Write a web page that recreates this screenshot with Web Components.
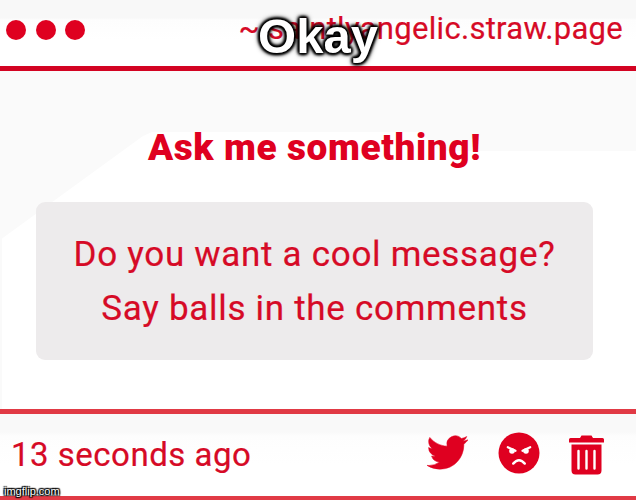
<!DOCTYPE html>
<html lang="en">
<head>
<meta charset="UTF-8">
<title>Ask me something!</title>
<style>
    body {
        margin: 0;
        overflow: hidden;
        font-family: Roboto, "Liberation Sans", sans-serif;
        color: #d60a26;
    }
</style>
</head>
<body>
<ask-window>
    <window-bar slot="header">~ saintlyangelic.straw.page</window-bar>
    <ask-card heading="Ask me something!">
        <div>Do you want a cool message?</div>
        <div>Say balls in the comments</div>
    </ask-card>
    <window-footer slot="footer">13 seconds ago</window-footer>
    <meme-caption slot="overlay">Okay</meme-caption>
    <site-mark slot="overlay">imgflip.com</site-mark>
</ask-window>

<script>
class AskWindow extends HTMLElement {
    connectedCallback() {
        this.attachShadow({ mode: 'open' });
        this.shadowRoot.innerHTML = `
            <style>
                :host {
                    position: relative;
                    display: grid;
                    grid-template-rows: 66px 343px 91px;
                    width: 636px;
                    height: 500px;
                    background: #fff;
                    overflow: hidden;
                }
            </style>
            <slot name="header"></slot>
            <slot></slot>
            <slot name="footer"></slot>
            <slot name="overlay"></slot>
        `;
    }
}

class WindowBar extends HTMLElement {
    connectedCallback() {
        this.attachShadow({ mode: 'open' });
        this.shadowRoot.innerHTML = `
            <style>
                :host {
                    display: flex;
                    justify-content: space-between;
                    align-items: flex-start;
                    box-sizing: border-box;
                    padding: 0 13px 0 6px;
                    background: linear-gradient(#f8f8f8 18px, #fdfdfd 20px, #fff 40px);
                }
                .dots {
                    display: flex;
                    gap: 9.7px;
                    padding-top: 19.7px;
                }
                .dots i {
                    width: 20px;
                    height: 20px;
                    border-radius: 50%;
                    background: #df0020;
                }
                .address {
                    padding-top: 11px;
                    font-size: 31px;
                    line-height: 36px;
                    letter-spacing: 0.3px;
                    -webkit-text-stroke: 0.2px;
                    white-space: nowrap;
                }
            </style>
            <div class="dots"><i></i><i></i><i></i></div>
            <div class="address"><slot></slot></div>
        `;
    }
}

class AskCard extends HTMLElement {
    connectedCallback() {
        this.attachShadow({ mode: 'open' });
        this.shadowRoot.innerHTML = `
            <style>
                :host {
                    position: relative;
                    z-index: 0;
                    display: flex;
                    flex-direction: column;
                    box-sizing: border-box;
                    border-top: 5px solid #d30322;
                    padding: 0 43px 0 36px;
                    background: linear-gradient(#fafafa, #fafafa) 0 0 / 2px 100% no-repeat, #fff;
                }
                /* light sheet behind the heading, cut off along a diagonal */
                .sheet {
                    position: absolute;
                    z-index: -1;
                    inset: 0;
                    background: #fafafa;
                    clip-path: polygon(0 0, 100% 0, 100% 80px, 440px 80px, 420px 61px, 152px 61px, 143px 65px, 0 169px);
                }
                h1 {
                    margin: 0;
                    padding-top: 55px;
                    height: 76px;
                    line-height: 44px;
                    font-size: 37px;
                    font-weight: 900;
                    letter-spacing: 0.6px;
                    text-align: center;
                    color: #df0020;
                    white-space: nowrap;
                }
                .question {
                    height: 158px;
                    box-sizing: border-box;
                    padding-top: 26px;
                    border-radius: 9px;
                    background: #edebec;
                    font-size: 35px;
                    line-height: 54px;
                    letter-spacing: 0.7px;
                    -webkit-text-stroke: 0.2px;
                    text-align: center;
                    white-space: nowrap;
                }
            </style>
            <div class="sheet"></div>
            <h1>${this.getAttribute('heading')}</h1>
            <div class="question"><slot></slot></div>
        `;
    }
}

class WindowFooter extends HTMLElement {
    connectedCallback() {
        this.attachShadow({ mode: 'open' });
        this.shadowRoot.innerHTML = `
            <style>
                :host {
                    display: flex;
                    justify-content: space-between;
                    box-sizing: border-box;
                    padding: 0 32px 0 11px;
                    border-top: 5px solid #e13a45;
                    border-bottom: 4px solid #e13a45;
                    background: linear-gradient(#f9f9f9 18px, #fdfdfd 22px, #fff 50px);
                }
                .time {
                    padding-top: 21px;
                    font-size: 33px;
                    line-height: 40px;
                    letter-spacing: 0.5px;
                    -webkit-text-stroke: 0.2px;
                    white-space: nowrap;
                }
                .actions {
                    display: flex;
                    align-items: flex-start;
                    color: #df0020;
                }
                svg {
                    display: block;
                    fill: currentColor;
                }
                .bird {
                    width: 41px;
                    height: 41px;
                    margin: 18px 30px 0 0;
                    stroke: currentColor;
                    stroke-width: 0.3;
                }
                .angry {
                    width: 42px;
                    height: 42px;
                    margin: 18px 29px 0 0;
                }
                .trash {
                    width: 35px;
                    height: 40px;
                    margin-top: 21px;
                }
            </style>
            <div class="time"><slot></slot></div>
            <div class="actions">
                <svg class="bird" viewBox="0 0 24 24"><path d="M23.953 4.57a10 10 0 01-2.825.775 4.958 4.958 0 002.163-2.723c-.951.555-2.005.959-3.127 1.184a4.92 4.92 0 00-8.384 4.482C7.69 8.095 4.067 6.13 1.64 3.162a4.822 4.822 0 00-.666 2.475c0 1.71.87 3.213 2.188 4.096a4.904 4.904 0 01-2.228-.616v.06a4.923 4.923 0 003.946 4.827 4.996 4.996 0 01-2.212.085 4.936 4.936 0 004.604 3.417 9.867 9.867 0 01-6.102 2.105c-.39 0-.779-.023-1.17-.067a13.995 13.995 0 007.557 2.209c9.053 0 13.998-7.496 13.998-13.985 0-.21 0-.42-.015-.63A9.935 9.935 0 0024 4.59z"/></svg>
                <svg class="angry" viewBox="0 0 42 42">
                    <circle cx="21" cy="21" r="20.5"/>
                    <g fill="none" stroke="#fff" stroke-linecap="round">
                        <path d="M9.800 15.200l7.700 3.600M32.200 15.200l-7.700 3.600" stroke-width="2.200"/>
                        <path d="M15.200 31.600q5.800-6.800 11.600 0" stroke-width="2.400"/>
                    </g>
                    <circle cx="14" cy="19" r="2.800" fill="#fff"/>
                    <circle cx="28" cy="19" r="2.800" fill="#fff"/>
                </svg>
                <svg class="trash" viewBox="0 0 35 40">
                    <path d="M1.500 3H11l1.500-2.500h10L24 3h9.500q1.500 0 1.500 1.500V7.500H0V4.500Q0 3 1.500 3zM2.500 9.500h30v26q0 4-4 4h-22q-4 0-4-4z"/>
                    <path d="M9.500 16v17.500M17.500 16v17.500M25.500 16v17.500" stroke="#fff" stroke-width="2.400" stroke-linecap="round"/>
                </svg>
            </div>
        `;
    }
}

class MemeCaption extends HTMLElement {
    connectedCallback() {
        this.attachShadow({ mode: 'open' });
        this.shadowRoot.innerHTML = `
            <style>
                :host {
                    position: absolute;
                    top: 8px;
                    left: 0;
                    width: 636px;
                    text-align: center;
                    font: bold 49px/56px "Liberation Sans", Arial, sans-serif;
                    color: #fff;
                    text-shadow: 0 0 3px #000, 0 0 4px #000, 0 0 5px #000, 0 0 6px #000,
                        1px 1px 3px #000, -1px -1px 3px #000, 1px -1px 3px #000, -1px 1px 3px #000;
                }
            </style>
            <slot></slot>
        `;
    }
}

class SiteMark extends HTMLElement {
    connectedCallback() {
        this.attachShadow({ mode: 'open' });
        this.shadowRoot.innerHTML = `
            <style>
                :host {
                    position: absolute;
                    left: 4px;
                    bottom: 2px;
                    font: 11px/13px "Liberation Sans", Arial, sans-serif;
                    color: #fff;
                    text-shadow: 0 0 1px #000, 0 0 2px #000, 1px 1px 1px #000, -1px -1px 1px #000,
                        1px -1px 1px #000, -1px 1px 1px #000;
                }
            </style>
            <slot></slot>
        `;
    }
}

customElements.define('ask-window', AskWindow);
customElements.define('window-bar', WindowBar);
customElements.define('ask-card', AskCard);
customElements.define('window-footer', WindowFooter);
customElements.define('meme-caption', MemeCaption);
customElements.define('site-mark', SiteMark);
</script>
</body>
</html>
